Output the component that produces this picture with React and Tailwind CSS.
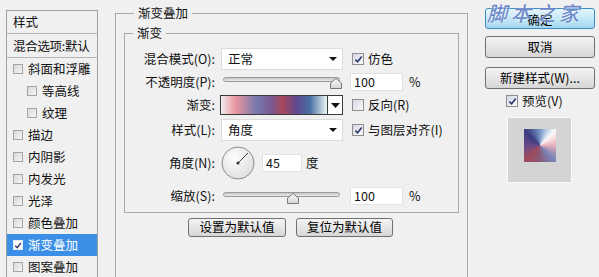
import React from "react";

const FONT = "font-['Noto_Sans_CJK_SC','Noto_Sans',sans-serif]";

const LEFT_ITEMS = [
  { label: "斜面和浮雕", indent: false },
  { label: "等高线", indent: true },
  { label: "纹理", indent: true },
  { label: "描边", indent: false },
  { label: "内阴影", indent: false },
  { label: "内发光", indent: false },
  { label: "光泽", indent: false },
  { label: "颜色叠加", indent: false },
  { label: "渐变叠加", indent: false, selected: true },
  { label: "图案叠加", indent: false },
];

function Check({ checked = false, small = false }) {
  const size = small ? "h-[10px] w-[10px]" : "h-[12px] w-[12px]";
  return (
    <span
      className={`relative inline-flex shrink-0 items-center justify-center border ${size} ${
        small ? "border-[#a4a4a4] bg-gradient-to-br from-[#d8d8d8] to-[#f6f6f6]" : "border-[#8e8f8f] bg-gradient-to-br from-[#d6d6e6] to-[#fafafa]"
      } ${checked && small ? "bg-white from-white to-white border-[#dfe8f5]" : ""}`}
    >
      {checked && (
        <svg viewBox="0 0 10 10" className="h-[9px] w-[9px]" aria-hidden>
          <path d="M1.5 5.2 L4 7.6 L8.6 1.8" fill="none" stroke="#2c3b6e" strokeWidth="1.8" />
        </svg>
      )}
    </span>
  );
}

function CheckLabel({ checked, label }) {
  return (
    <div className="ml-[9px] flex items-center gap-[4px]">
      <Check checked={checked} />
      <span>{label}</span>
    </div>
  );
}

function Thumb() {
  return (
    <svg viewBox="0 0 12 11" className="h-[11px] w-[12px]" aria-hidden>
      <defs>
        <linearGradient id="thumbg" x1="0" y1="0" x2="0" y2="1">
          <stop offset="0" stopColor="#fbfbfb" />
          <stop offset="1" stopColor="#d4d4d4" />
        </linearGradient>
      </defs>
      <polygon points="6,0.5 11.5,5 11.5,10.5 0.5,10.5 0.5,5" fill="url(#thumbg)" stroke="#7a7a7a" />
    </svg>
  );
}

function Slider({ pos }) {
  return (
    <div className="relative h-full w-[122px]">
      <div className="absolute left-[2px] top-[5px] h-[5px] w-[117px] rounded-full border border-[#9a9a9a] bg-gradient-to-b from-[#c4c4c4] to-[#ececec]" />
      <div className="absolute top-[6px]" style={{ left: pos }}>
        <Thumb />
      </div>
    </div>
  );
}

function Select({ value }) {
  return (
    <div className="flex h-[22px] w-[122px] items-center justify-between border border-[#dcdcdc] bg-white pl-[6px] pr-[5px]">
      <span>{value}</span>
      <svg viewBox="0 0 8 4" className="h-[4px] w-[8px]" aria-hidden>
        <polygon points="0,0 8,0 4,4" fill="#111" />
      </svg>
    </div>
  );
}

function Field({ value, w }) {
  return (
    <div className={`flex h-[18px] items-center border border-[#e2e2e2] bg-white pl-[3px] ${w}`}>
      {value}
    </div>
  );
}

function Row({ label, mt, h, children }) {
  return (
    <div className={`flex items-center ${mt} ${h}`}>
      <div className="w-[91px] shrink-0 pr-[1px] text-right">{label}</div>
      <div className="ml-[5px] flex h-full items-center">{children}</div>
    </div>
  );
}

function WinButton({ children, className = "" }) {
  return (
    <button
      type="button"
      className={`flex items-center justify-center rounded-[3px] border border-[#707070] bg-gradient-to-b from-[#f4f4f4] via-[#e6e6e6] to-[#d6d6d6] text-[12.5px] leading-none text-black ${className}`}
    >
      {children}
    </button>
  );
}

export default function App() {
  return (
    <div className={`flex h-[277px] w-[599px] overflow-hidden bg-[#f0f0f0] text-[12.5px] leading-[14px] text-[#111] ${FONT}`}>
      {/* Style list */}
      <div className="ml-[6px] mt-[10px] h-[290px] w-[92px] shrink-0 border border-[#a0a0a0]">
        <div className="flex h-[23px] items-center border-b border-[#b4b4b4] pl-[6px]">样式</div>
        <div className="flex h-[24px] items-center border-b border-[#b4b4b4] pl-[6px] tracking-[-0.3px]">混合选项:默认</div>
        {LEFT_ITEMS.map((it) => (
          <div
            key={it.label}
            className={`flex h-[22px] items-center gap-[5px] ${it.indent ? "pl-[20px]" : "pl-[6px]"} ${
              it.selected ? "bg-[#3b8fe6] text-white" : ""
            }`}
          >
            <Check small checked={!!it.selected} />
            <span>{it.label}</span>
          </div>
        ))}
      </div>

      {/* Gradient overlay settings */}
      <fieldset className="ml-[17px] mt-[6px] h-[300px] w-[353px] shrink-0 border border-[#a8a8a8]">
        <legend className="ml-[18px] px-[4px] leading-[14px]">渐变叠加</legend>
        <fieldset className="mx-[8px] mt-[6px] border border-[#a8a8a8] pb-[7px] pt-[8px]">
          <legend className="ml-[8px] px-[4px] leading-[14px]">渐变</legend>

          <Row label="混合模式(O):" mt="mt-0" h="h-[22px]">
            <Select value="正常" />
            <CheckLabel checked label="仿色" />
          </Row>

          <Row label="不透明度(P):" mt="mt-[2px]" h="h-[20px]">
            <Slider pos={109} />
            <div className="ml-[7px]">
              <Field value="100" w="w-[53px]" />
            </div>
            <span className="ml-[6px]">%</span>
          </Row>

          <Row label="渐变:" mt="mt-[3px]" h="h-[20px]">
            <div className="-ml-[1px] flex h-[20px] w-[123px] border border-[#3a3a3a] bg-white">
              <div className="h-full w-[106px] bg-[linear-gradient(to_right,#f4ecee_0%,#e8969e_14%,#7478ae_34%,#7c5890_48%,#a8485c_58%,#5a4a90_72%,#4a70a2_84%,#eaf6f2_100%)]" />
              <div className="flex flex-1 items-center justify-center border-l border-[#3a3a3a]">
                <svg viewBox="0 0 9 5" className="h-[5px] w-[9px]" aria-hidden>
                  <polygon points="0,0 9,0 4.5,5" fill="#111" />
                </svg>
              </div>
            </div>
            <CheckLabel checked={false} label="反向(R)" />
          </Row>

          <Row label="样式(L):" mt="mt-[4px]" h="h-[22px]">
            <Select value="角度" />
            <CheckLabel checked label="与图层对齐(I)" />
          </Row>

          <Row label="角度(N):" mt="mt-[5px]" h="h-[34px]">
            <svg viewBox="0 0 34 34" className="h-[34px] w-[34px]" aria-hidden>
              <defs>
                <radialGradient id="dialg" cx="0.4" cy="0.35" r="0.7">
                  <stop offset="0" stopColor="#fdfdfd" />
                  <stop offset="1" stopColor="#dedede" />
                </radialGradient>
              </defs>
              <circle cx="17" cy="17" r="16" fill="url(#dialg)" stroke="#8c8c8c" />
              <line x1="17" y1="17" x2="27" y2="7" stroke="#444" strokeWidth="1" />
              <circle cx="17" cy="17" r="1.6" fill="#333" />
            </svg>
            <div className="ml-[7px]">
              <Field value="45" w="w-[40px]" />
            </div>
            <span className="ml-[4px]">度</span>
          </Row>

          <Row label="缩放(S):" mt="mt-[7px]" h="h-[18px]">
            <Slider pos={66} />
            <div className="ml-[7px]">
              <Field value="100" w="w-[53px]" />
            </div>
            <span className="ml-[6px]">%</span>
          </Row>
        </fieldset>

        <div className="mt-[5px] flex justify-center gap-[10px] pr-[2px]">
          <WinButton className="h-[19px] w-[98px]">设置为默认值</WinButton>
          <WinButton className="h-[19px] w-[97px]">复位为默认值</WinButton>
        </div>
      </fieldset>

      {/* Dialog buttons & preview */}
      <div className="ml-[17px] mt-[8px] flex w-[110px] shrink-0 flex-col">
        <div className="relative">
          <button
            type="button"
            className="flex h-[21px] w-full items-center justify-center rounded-[3px] border border-[#3a8fbe] bg-gradient-to-b from-[#e6f6fd] via-[#c4e8f7] to-[#a4d8ee] pt-[3px] text-[12.5px] leading-none text-black"
          >
            确定
          </button>
          <span className="pointer-events-none absolute -top-[6px] left-[2px] text-[20px] font-medium italic leading-[22px] tracking-[4px] text-[#5574c0]/85 [text-shadow:0_0_2px_#fff]">
            脚本之家
          </span>
        </div>
        <WinButton className="mt-[7px] h-[22px] w-full">取消</WinButton>
        <WinButton className="mt-[9px] h-[22px] w-full">新建样式(W)...</WinButton>
        <div className="ml-[21px] mt-[5px] flex items-center gap-[4px]">
          <Check checked />
          <span>预览(V)</span>
        </div>
        <div className="ml-[22px] mt-[9px] flex h-[66px] w-[65px] items-start justify-center border border-[#fafafa] bg-[#d4d4d4] pt-[11px]">
          <div className="h-[33px] w-[32px] bg-[conic-gradient(from_45deg,#fff8f8,#e8b0b8_12%,#7a84b8_25%,#8a5878_38%,#a04a5c_50%,#6a4a88_62%,#3c3c80_75%,#7a9ac8_88%,#f8fcfc)]" />
        </div>
      </div>
    </div>
  );
}
